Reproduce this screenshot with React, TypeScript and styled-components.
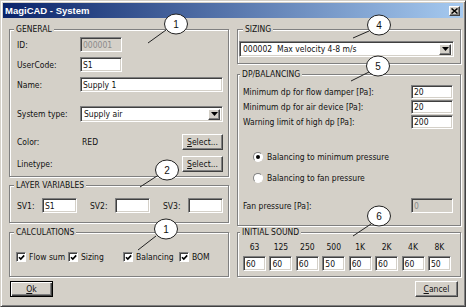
import React from "react";
import styled, { createGlobalStyle } from "styled-components";

const FONT = `"DejaVu Sans Condensed", "DejaVu Sans", sans-serif`;

const GlobalStyle = createGlobalStyle`
  html, body {
    margin: 0;
    padding: 0;
    background: #d4d0c8;
  }
`;

const Window = styled.div`
  position: relative;
  box-sizing: border-box;
  width: 466px;
  height: 307px;
  padding: 2px;
  display: flex;
  flex-direction: column;
  background: #d4d0c8;
  border: 1px solid;
  border-color: #d4d0c8 #404040 #404040 #d4d0c8;
  box-shadow: inset 1px 1px #fff, inset -1px -1px #808080;
  font-family: ${FONT};
  font-stretch: condensed;
  font-size: 8.5px;
  color: #111;
  overflow: hidden;
`;

const TitleBar = styled.div`
  height: 15px;
  flex-shrink: 0;
  display: flex;
  align-items: center;
  justify-content: space-between;
  padding: 0 3px 0 2px;
  background: linear-gradient(to right, #0a246a, #a6caf0);
`;

const Title = styled.span`
  color: #fff;
  font-family: "Liberation Sans", Arial, sans-serif;
  font-stretch: normal;
  font-weight: bold;
  font-size: 9.5px;
`;

const CloseButton = styled.div`
  box-sizing: border-box;
  width: 11px;
  height: 10px;
  display: flex;
  align-items: center;
  justify-content: center;
  background: #d4d0c8;
  border: 1px solid;
  border-color: #fff #404040 #404040 #fff;
  box-shadow: inset -1px -1px #808080;
`;

const Content = styled.div`
  display: grid;
  grid-template-columns: 220px 224px;
  column-gap: 8px;
  margin-top: 11px;
  padding-left: 6px;
`;

const Column = styled.div`
  display: flex;
  flex-direction: column;
`;

const Group = styled.div<{ $h: number; $mt?: number; $pad: string }>`
  box-sizing: border-box;
  height: ${(p) => p.$h}px;
  margin-top: ${(p) => p.$mt ?? 0}px;
  padding: ${(p) => p.$pad};
  display: flex;
  flex-direction: column;
  border: 1px solid #808080;
  box-shadow: inset 1px 1px #fff, 1px 1px #fff;
`;

const Caption = styled.span<{ $ml?: number }>`
  align-self: flex-start;
  height: 11px;
  line-height: 11px;
  margin: -6px 0 0 ${(p) => p.$ml ?? -3}px;
  padding: 0 2px;
  background: #d4d0c8;
  white-space: nowrap;
`;

const Row = styled.div<{ $mt: number; $h: number }>`
  display: flex;
  align-items: center;
  margin-top: ${(p) => p.$mt}px;
  height: ${(p) => p.$h}px;
  white-space: nowrap;
`;

const Label = styled.span<{ $w?: number }>`
  flex: ${(p) => (p.$w ? `0 0 ${p.$w}px` : "1 1 auto")};
`;

const Field = styled.div<{ $w?: number; $disabled?: boolean }>`
  box-sizing: border-box;
  flex: ${(p) => (p.$w ? `0 0 ${p.$w}px` : "1 1 auto")};
  height: 100%;
  padding: 0 2px;
  display: flex;
  align-items: center;
  background: ${(p) => (p.$disabled ? "#d4d0c8" : "#fff")};
  color: ${(p) => (p.$disabled ? "#8a8a8a" : "#111")};
  border: 1px solid;
  border-color: #808080 #fff #fff #808080;
  box-shadow: inset 1px 1px #404040, inset -1px -1px #d4d0c8;
`;

const Combo = styled(Field)`
  padding: 0 2px 0 3px;
  justify-content: space-between;
`;

const ArrowButton = styled.div`
  box-sizing: border-box;
  width: 12px;
  height: 11px;
  display: flex;
  align-items: center;
  justify-content: center;
  background: #d4d0c8;
  border: 1px solid;
  border-color: #fff #404040 #404040 #fff;
  box-shadow: inset -1px -1px #808080;
`;

const Button = styled.div<{ $w: number; $default?: boolean }>`
  box-sizing: border-box;
  width: ${(p) => p.$w}px;
  height: 100%;
  display: flex;
  align-items: center;
  justify-content: center;
  background: #d4d0c8;
  border: 1px solid;
  border-color: ${(p) => (p.$default ? "#000" : "#fff #404040 #404040 #fff")};
  box-shadow: ${(p) =>
    p.$default
      ? "inset 1px 1px #fff, inset -1px -1px #404040, inset -2px -2px #808080"
      : "inset -1px -1px #808080"};
`;

const Key = styled.span`
  text-decoration: underline;
`;

const Spread = styled(Row)`
  justify-content: space-between;
`;

const VarPair = styled.div`
  display: flex;
  align-items: center;
  height: 100%;
`;

const CalcRow = styled.div`
  display: grid;
  grid-template-columns: 52px 55px 56px auto;
  align-items: center;
  margin: 14px 0 0 -1px;
  height: 10px;
`;

const CheckItem = styled.span`
  display: flex;
  align-items: center;
  gap: 3px;
  white-space: nowrap;
`;

const Box = styled.span`
  box-sizing: border-box;
  width: 10px;
  height: 10px;
  display: flex;
  align-items: center;
  justify-content: center;
  background: #fff;
  border: 1px solid;
  border-color: #808080 #fff #fff #808080;
  box-shadow: inset 1px 1px #404040;
`;

const RadioRow = styled(Row)`
  padding-left: 10px;
  gap: 4px;
`;

const RadioCircle = styled.span<{ $on?: boolean }>`
  box-sizing: border-box;
  width: 10px;
  height: 10px;
  border-radius: 50%;
  display: flex;
  align-items: center;
  justify-content: center;
  background: #fff;
  border: 1px solid;
  border-color: #808080 #fff #fff #808080;
  &::after {
    content: "";
    width: 4px;
    height: 4px;
    border-radius: 50%;
    background: ${(p) => (p.$on ? "#000" : "transparent")};
  }
`;

const SoundGrid = styled.div`
  display: grid;
  grid-template-columns: repeat(8, 23px);
  grid-template-rows: 10px 15px;
  row-gap: 4px;
  justify-content: space-between;
  margin-top: 4px;
`;

const SoundHead = styled.span`
  text-align: center;
  line-height: 10px;
`;

const Footer = styled.div`
  display: flex;
  justify-content: space-between;
  height: 16px;
  margin-top: 4px;
  padding: 0 5px 0 7px;
`;

const Callouts = styled.svg`
  position: absolute;
  left: 0;
  top: 0;
  pointer-events: none;
`;

const calloutData = [
  { n: "1", cx: 175, cy: 23, x1: 147, y1: 42, x2: 165, y2: 29 },
  { n: "2", cx: 166, cy: 169, x1: 139, y1: 186, x2: 156, y2: 175 },
  { n: "1", cx: 165, cy: 228, x1: 137, y1: 249, x2: 155, y2: 235 },
  { n: "4", cx: 378, cy: 24, x1: 352, y1: 37, x2: 368, y2: 30 },
  { n: "5", cx: 377, cy: 65, x1: 350, y1: 80, x2: 368, y2: 71 },
  { n: "6", cx: 378, cy: 215, x1: 352, y1: 235, x2: 370, y2: 223 },
];

const sounds = [
  ["63", "60"],
  ["125", "60"],
  ["250", "60"],
  ["500", "50"],
  ["1K", "60"],
  ["2K", "60"],
  ["4K", "60"],
  ["8K", "50"],
];

const Arrow = () => (
  <svg width="7" height="4" viewBox="0 0 7 4">
    <path d="M0 0h7L3.5 4z" fill="#000" />
  </svg>
);

const Tick = () => (
  <svg width="7" height="7" viewBox="0 0 7 7">
    <path d="M1 3.2l1.8 1.9L6.2 1.4" fill="none" stroke="#000" strokeWidth="1.6" />
  </svg>
);

const Check = ({ label }: { label: string }) => (
  <CheckItem>
    <Box>
      <Tick />
    </Box>
    {label}
  </CheckItem>
);

export default function App() {
  return (
    <>
      <GlobalStyle />
      <Window>
        <TitleBar>
          <Title>MagiCAD - System</Title>
          <CloseButton>
            <svg width="7" height="6" viewBox="0 0 7 6">
              <path d="M0.5 0.5l6 5M6.5 0.5l-6 5" stroke="#000" strokeWidth="1.5" />
            </svg>
          </CloseButton>
        </TitleBar>

        <Content>
          <Column>
            <Group $h={148} $pad="0 5px 0 7px">
              <Caption>GENERAL</Caption>
              <Row $mt={2} $h={15}>
                <Label $w={63}>ID:</Label>
                <Field $w={42} $disabled>000001</Field>
              </Row>
              <Row $mt={5} $h={15}>
                <Label $w={63}>UserCode:</Label>
                <Field $w={42}>S1</Field>
              </Row>
              <Row $mt={5} $h={15}>
                <Label $w={63}>Name:</Label>
                <Field>Supply 1</Field>
              </Row>
              <Row $mt={14} $h={16}>
                <Label $w={63}>System type:</Label>
                <Combo>
                  Supply air
                  <ArrowButton>
                    <Arrow />
                  </ArrowButton>
                </Combo>
              </Row>
              <Row $mt={12} $h={16}>
                <Label $w={65}>Color:</Label>
                <Label>RED</Label>
                <Button $w={41}>
                  <span>
                    <Key>S</Key>elect...
                  </span>
                </Button>
              </Row>
              <Row $mt={6} $h={16}>
                <Label>Linetype:</Label>
                <Button $w={41}>
                  <span>
                    <Key>S</Key>elect...
                  </span>
                </Button>
              </Row>
            </Group>

            <Group $h={38} $mt={8} $pad="0 5px 0 7px">
              <Caption>LAYER VARIABLES</Caption>
              <Spread $mt={7} $h={15}>
                <VarPair>
                  <Label $w={25}>SV1:</Label>
                  <Field $w={35}>S1</Field>
                </VarPair>
                <VarPair>
                  <Label $w={25}>SV2:</Label>
                  <Field $w={35} />
                </VarPair>
                <VarPair>
                  <Label $w={25}>SV3:</Label>
                  <Field $w={35} />
                </VarPair>
              </Spread>
            </Group>

            <Group $h={45} $mt={9} $pad="0 5px 0 7px">
              <Caption>CALCULATIONS</Caption>
              <CalcRow>
                <Check label="Flow sum" />
                <Check label="Sizing" />
                <Check label="Balancing" />
                <Check label="BOM" />
              </CalcRow>
            </Group>
          </Column>

          <Column>
            <Group $h={35} $pad="0 6px 0 1px">
              <Caption $ml={4}>SIZING</Caption>
              <Row $mt={6} $h={16}>
                <Combo>
                  000002&nbsp; Max velocity 4-8 m/s
                  <ArrowButton>
                    <Arrow />
                  </ArrowButton>
                </Combo>
              </Row>
            </Group>

            <Group $h={152} $mt={10} $pad="0 7px 0 5px">
              <Caption>DP/BALANCING</Caption>
              <Row $mt={5} $h={14}>
                <Label>Minimum dp for flow damper [Pa]:</Label>
                <Field $w={42}>20</Field>
              </Row>
              <Row $mt={1} $h={14}>
                <Label>Minimum dp for air device [Pa]:</Label>
                <Field $w={42}>20</Field>
              </Row>
              <Row $mt={1} $h={14}>
                <Label>Warning limit of high dp [Pa]:</Label>
                <Field $w={42}>200</Field>
              </Row>
              <RadioRow $mt={23} $h={10}>
                <RadioCircle $on />
                Balancing to minimum pressure
              </RadioRow>
              <RadioRow $mt={11} $h={10}>
                <RadioCircle />
                Balancing to fan pressure
              </RadioRow>
              <Row $mt={15} $h={15}>
                <Label>Fan pressure [Pa]:</Label>
                <Field $w={42} $disabled>0</Field>
              </Row>
            </Group>

            <Group $h={45} $mt={6} $pad="0 9px 0 5px">
              <Caption>INITIAL SOUND</Caption>
              <SoundGrid>
                {sounds.map(([hz]) => (
                  <SoundHead key={hz}>{hz}</SoundHead>
                ))}
                {sounds.map(([hz, v]) => (
                  <Field key={hz + "f"} $w={23}>{v}</Field>
                ))}
              </SoundGrid>
            </Group>
          </Column>
        </Content>

        <Footer>
          <Button $w={43} $default>
            <span>
              <Key>O</Key>k
            </span>
          </Button>
          <Button $w={43}>
            <span>
              <Key>C</Key>ancel
            </span>
          </Button>
        </Footer>

        <Callouts width="466" height="307" viewBox="0 0 466 307">
          {calloutData.map((c, i) => (
            <g key={i}>
              <line x1={c.x1} y1={c.y1} x2={c.x2} y2={c.y2} stroke="#222" strokeWidth="1" />
              <ellipse cx={c.cx} cy={c.cy} rx="11.5" ry="10" fill="#fff" stroke="#222" strokeWidth="1" />
              <text
                x={c.cx}
                y={c.cy + 3.5}
                textAnchor="middle"
                fontFamily='"Liberation Sans", Arial, sans-serif'
                fontSize="10"
                fill="#111"
              >
                {c.n}
              </text>
            </g>
          ))}
        </Callouts>
      </Window>
    </>
  );
}
